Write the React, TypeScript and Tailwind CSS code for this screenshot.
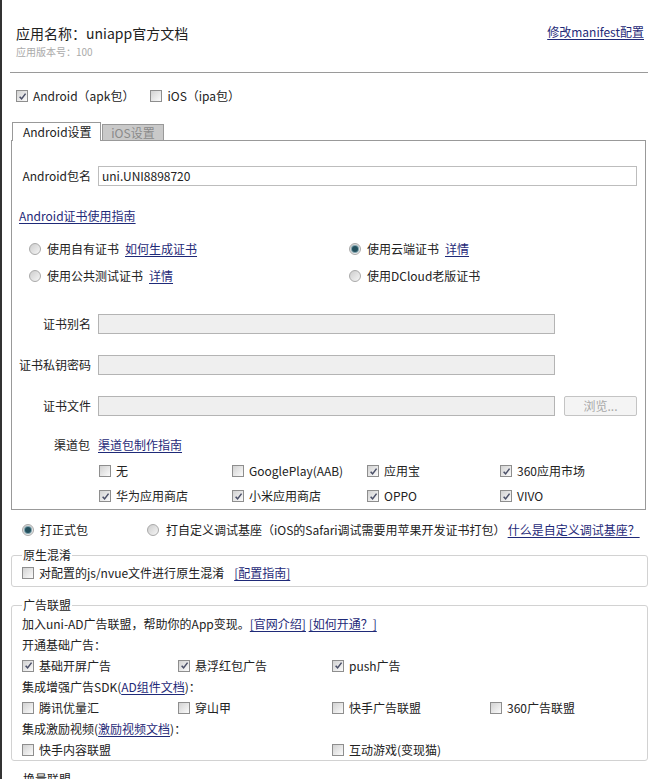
import { ReactNode } from "react";

const link = "text-[#1f2a78] underline underline-offset-2";

function Check({ checked }: { checked?: boolean }) {
  return (
    <span className="inline-flex h-3 w-3 shrink-0 items-center justify-center border border-[#8e8e8e] bg-linear-to-br from-[#d2d2d2] to-[#fbfbfb]">
      {checked && (
        <svg viewBox="0 0 10 10" className="h-[9px] w-[9px]">
          <path d="M1.8 5.2 L4 7.6 L8.4 1.8" fill="none" stroke="#4b5068" strokeWidth="1.7" />
        </svg>
      )}
    </span>
  );
}

function Radio({ checked }: { checked?: boolean }) {
  return (
    <span className="inline-flex h-3 w-3 shrink-0 items-center justify-center rounded-full border border-[#a9a9a9] bg-linear-to-br from-[#cdcdcd] to-[#f6f6f6]">
      {checked && <span className="h-[6px] w-[6px] rounded-full bg-[#23505d] ring-1 ring-[#7fa3ad]" />}
    </span>
  );
}

function CheckItem({ checked, children }: { checked?: boolean; children: ReactNode }) {
  return (
    <span className="flex items-center gap-[5px]">
      <Check checked={checked} />
      <span>{children}</span>
    </span>
  );
}

function FieldRow({ label, first, children }: { label: string; first?: boolean; children: ReactNode }) {
  return (
    <div className={`${first ? "mt-[28px]" : "mt-[21px]"} flex h-5 items-center`}>
      <span className="w-[86px] pr-[7px] text-right">{label}</span>
      {children}
    </div>
  );
}

const channels: [string, boolean][] = [
  ["无", false],
  ["GooglePlay(AAB)", false],
  ["应用宝", true],
  ["360应用市场", true],
  ["华为应用商店", true],
  ["小米应用商店", true],
  ["OPPO", true],
  ["VIVO", true],
];

export default function App() {
  return (
    <div className="min-h-[779px] w-full border-l-2 border-[#333] bg-white pl-[9px] pr-[7px] font-['Noto_Sans_CJK_SC',sans-serif] text-[12px] text-[#222]">
      <div className="flex items-start justify-between pl-[5px] pr-[4px] pt-[23px]">
        <div>
          <div className="h-5 text-[14px] leading-5">应用名称：uniapp官方文档</div>
          <div className="mt-[2px] text-[10px] leading-[14px] text-[#aaa]">应用版本号：100</div>
        </div>
        <a className={`mt-[2px] leading-[14px] ${link}`}>修改manifest配置</a>
      </div>

      <div className="-ml-px mt-[13px] h-px bg-[#9a9a9a]" />

      <div className="mt-[13px] flex h-5 items-center pl-[5px]">
        <CheckItem checked>Android（apk包）</CheckItem>
        <span className="ml-[16px]">
          <CheckItem>iOS（ipa包）</CheckItem>
        </span>
      </div>

      <div className="mt-[16px] flex items-end pl-px">
        <div className="relative z-10 -mb-px flex h-[19px] w-[89px] items-center border border-b-0 border-[#999] bg-white pl-[10px]">
          Android设置
        </div>
        <div className="ml-px flex h-[16px] w-[62px] items-center justify-center border border-b-0 border-[#999] bg-[#c9c9c9] text-[#8a8a8a]">
          iOS设置
        </div>
      </div>

      <div className="mr-[2px] border border-[#999] pb-[3px]">
        <div className="mt-[25px] flex h-5 items-center">
          <span className="w-[86px] pr-[7px] text-right">Android包名</span>
          <div className="mr-[8px] flex h-5 flex-1 items-center border border-[#bdbdbd] bg-white px-[3px]">uni.UNI8898720</div>
        </div>

        <div className="mt-[22px] pl-[7px] leading-4">
          <a className={link}>Android证书使用指南</a>
        </div>

        <div className="mt-[15px] grid grid-cols-[320px_1fr] gap-y-[7px] pl-[17px]">
          <span className="flex h-5 items-center gap-[6px]">
            <Radio />
            使用自有证书 <a className={link}>如何生成证书</a>
          </span>
          <span className="flex h-5 items-center gap-[6px]">
            <Radio checked />
            使用云端证书 <a className={link}>详情</a>
          </span>
          <span className="flex h-5 items-center gap-[6px]">
            <Radio />
            使用公共测试证书 <a className={link}>详情</a>
          </span>
          <span className="flex h-5 items-center gap-[6px]">
            <Radio />
            使用DCloud老版证书
          </span>
        </div>

        <FieldRow label="证书别名" first>
          <div className="h-5 w-[457px] border border-[#b4b4b4] bg-[#efefef]" />
        </FieldRow>
        <FieldRow label="证书私钥密码">
          <div className="h-5 w-[457px] border border-[#b4b4b4] bg-[#efefef]" />
        </FieldRow>
        <FieldRow label="证书文件">
          <div className="h-5 w-[457px] border border-[#b4b4b4] bg-[#efefef]" />
          <button className="ml-[9px] flex h-5 w-[73px] items-center justify-center rounded-[2px] border border-[#c4c4c4] bg-[#f4f4f4] text-[#a8a8a8]">
            浏览...
          </button>
        </FieldRow>

        <div className="mt-[21px] flex h-4 items-center leading-4">
          <span className="w-[86px] pr-[8px] text-right">渠道包</span>
          <a className={link}>渠道包制作指南</a>
        </div>

        <div className="mt-[8px] grid grid-cols-[133px_135px_133px_1fr] gap-y-[5px] pl-[87px]">
          {channels.map(([name, on]) => (
            <span key={name} className="flex h-5 items-center">
              <CheckItem checked={on}>{name}</CheckItem>
            </span>
          ))}
        </div>
      </div>

      <div className="mt-[10px] flex h-5 items-center pl-[11px]">
        <span className="flex w-[125px] items-center gap-[6px]">
          <Radio checked />
          打正式包
        </span>
        <span className="flex items-center gap-[7px]">
          <Radio />
          打自定义调试基座（iOS的Safari调试需要用苹果开发证书打包）
        </span>
        <a className={`ml-[2px] ${link}`}>什么是自定义调试基座？</a>
      </div>

      <fieldset className="mt-[7px] rounded-[3px] border border-[#d2d2d2] px-[10px] pb-[5px]">
        <legend className="px-px leading-4">原生混淆</legend>
        <div className="mt-[2px] flex h-4 items-center">
          <CheckItem>对配置的js/nvue文件进行原生混淆</CheckItem>
          <a className={`ml-[10px] ${link}`}>[配置指南]</a>
        </div>
      </fieldset>

      <fieldset className="mt-[10px] rounded-[3px] border border-[#d2d2d2] px-[10px]">
        <legend className="px-px leading-4">广告联盟</legend>
        <div className="leading-[21px]">
          <div className="h-[21px]">
            加入uni-AD广告联盟，帮助你的App变现。<a className={link}>[官网介绍]</a> <a className={link}>[如何开通？]</a>
          </div>
          <div className="h-[21px]">开通基础广告：</div>
          <div className="grid h-[21px] grid-cols-[156px_154px_158px_1fr] items-center">
            <CheckItem checked>基础开屏广告</CheckItem>
            <CheckItem checked>悬浮红包广告</CheckItem>
            <CheckItem checked>push广告</CheckItem>
          </div>
          <div className="h-[21px]">
            集成增强广告SDK(<a className={link}>AD组件文档</a>)：
          </div>
          <div className="grid h-[21px] grid-cols-[156px_154px_158px_1fr] items-center">
            <CheckItem>腾讯优量汇</CheckItem>
            <CheckItem>穿山甲</CheckItem>
            <CheckItem>快手广告联盟</CheckItem>
            <CheckItem>360广告联盟</CheckItem>
          </div>
          <div className="h-[21px]">
            集成激励视频(<a className={link}>激励视频文档</a>)：
          </div>
          <div className="grid h-[21px] grid-cols-[310px_1fr] items-center">
            <CheckItem>快手内容联盟</CheckItem>
            <CheckItem>互动游戏(变现猫)</CheckItem>
          </div>
        </div>
      </fieldset>

      <fieldset className="mt-[10px] rounded-[3px] border border-[#d2d2d2] px-[10px]">
        <legend className="px-px leading-4">换量联盟</legend>
        <div className="h-[30px]" />
      </fieldset>
    </div>
  );
}
